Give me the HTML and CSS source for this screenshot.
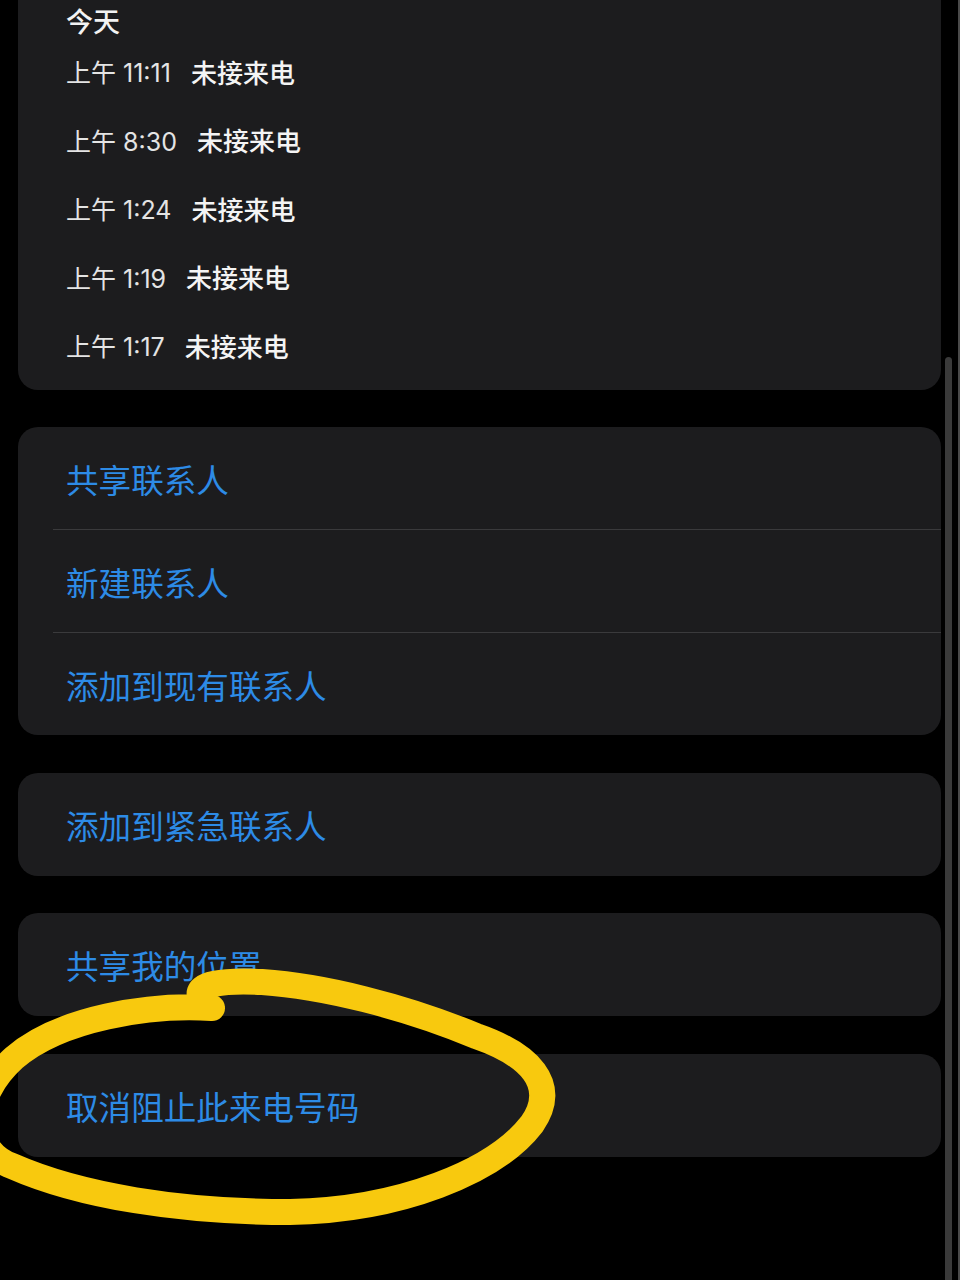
FILE: index.html
```html
<!DOCTYPE html>
<html lang="zh-CN">
<head>
<meta charset="utf-8">
<title>通话详情</title>
<link rel="stylesheet" href="styles.css">
</head>
<body>
<div class="page">
  <div class="card card-recents">
    <div class="day">今天</div>
    <div class="call"><span class="time">上午 11:11</span><span class="kind">未接来电</span></div>
    <div class="call"><span class="time">上午 8:30</span><span class="kind">未接来电</span></div>
    <div class="call"><span class="time">上午 1:24</span><span class="kind">未接来电</span></div>
    <div class="call"><span class="time">上午 1:19</span><span class="kind">未接来电</span></div>
    <div class="call"><span class="time">上午 1:17</span><span class="kind">未接来电</span></div>
  </div>

  <div class="card">
    <div class="action action-group">共享联系人</div>
    <div class="sep"></div>
    <div class="action action-group">新建联系人</div>
    <div class="sep"></div>
    <div class="action action-group">添加到现有联系人</div>
  </div>

  <div class="card">
    <div class="action">添加到紧急联系人</div>
  </div>

  <div class="card">
    <div class="action">共享我的位置</div>
  </div>

  <div class="card">
    <div class="action">取消阻止此来电号码</div>
  </div>
</div>

<div class="scroll-thumb"></div>
<div class="edge-line"></div>

<svg class="scribble" width="960" height="1280" viewBox="0 0 960 1280" xmlns="http://www.w3.org/2000/svg">
  <path d="M 212 1008 C 150 1004 60 1018 14 1058 C -30 1098 -30 1150 12 1166 C 80 1196 180 1212 290 1212 C 400 1210 495 1172 532 1124 C 560 1084 528 1054 476 1036 C 404 1006 322 986 262 982 C 222 980 196 984 200 996 C 202 1004 208 1008 212 1008" fill="none" stroke="#f8c90e" stroke-width="26" stroke-linecap="round" stroke-linejoin="round"/>
</svg>
</body>
</html>
```

FILE: styles.css
```css
html, body {
  margin: 0;
  padding: 0;
  background: #000;
}

body {
  width: 960px;
  height: 1280px;
  overflow: hidden;
  position: relative;
  font-family: "Noto Sans CJK SC", "Noto Sans", sans-serif;
}

.page {
  display: flex;
  flex-direction: column;
  gap: 37.5px;
  padding: 0 19px 0 18px;
}

.card {
  background: #1c1c1e;
  border-radius: 20px;
  display: flex;
  flex-direction: column;
}

.card-recents {
  border-radius: 0 0 20px 20px;
  padding-bottom: 10px;
}

.day {
  height: 37px;
  padding-left: 48px;
  font-size: 27px;
  font-weight: 500;
  line-height: 42px;
  color: #f2f2f2;
}

.call {
  height: 68.5px;
  display: flex;
  align-items: center;
  padding-left: 48px;
  font-size: 25px;
  color: #ededed;
  gap: 20px;
}

.time {
  font-family: Inter, "Noto Sans CJK SC", sans-serif;
  color: #e4e4e4;
}

.kind {
  font-size: 26px;
  color: #f4f4f4;
  font-weight: 500;
}

.action {
  height: 103px;
  display: flex;
  align-items: center;
  padding-left: 48px;
  font-size: 32.6px;
  color: #2d8be6;
}

.action-group {
  height: 102px;
}

.sep {
  height: 1px;
  margin-left: 35px;
  background: #3a3a3c;
}

.scroll-thumb {
  position: absolute;
  left: 945px;
  top: 357px;
  width: 7px;
  height: 930px;
  border-radius: 4px;
  background: #3a3a3a;
}

.edge-line {
  position: absolute;
  left: 958px;
  top: 0;
  width: 2px;
  height: 1280px;
  background: #4a4a4a;
}

.scribble {
  position: absolute;
  left: 0;
  top: 0;
  pointer-events: none;
}
```
